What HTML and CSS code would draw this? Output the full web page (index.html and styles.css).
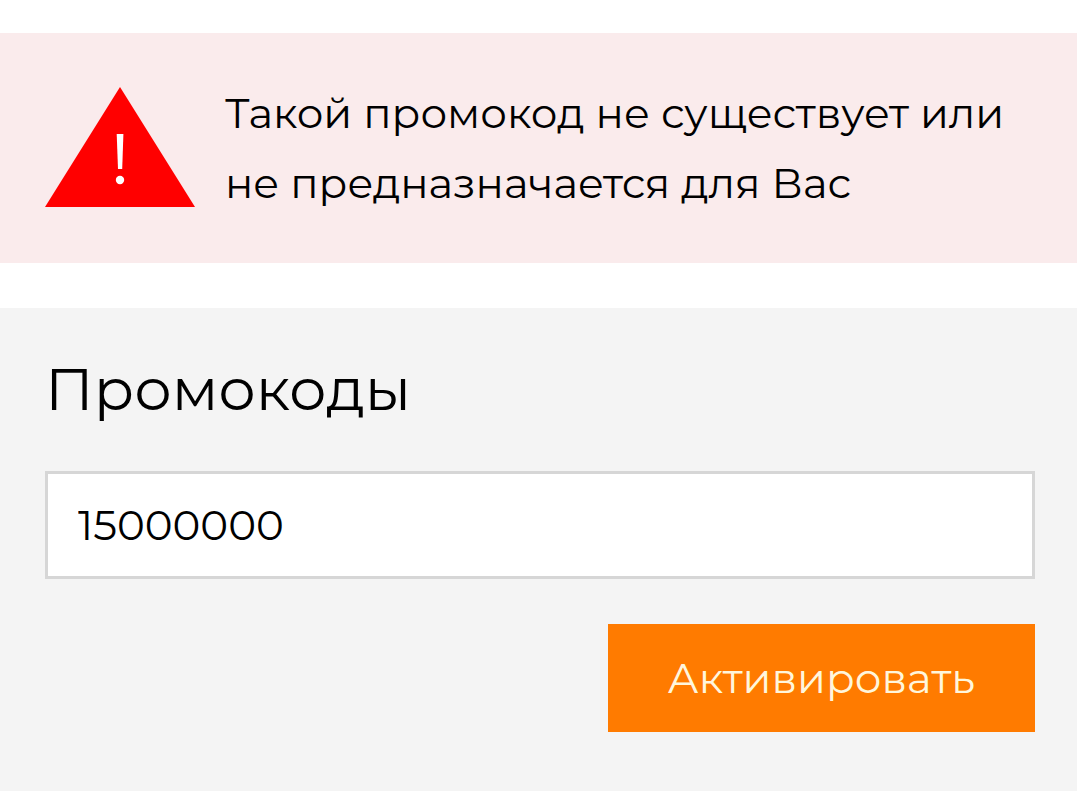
FILE: index.html
```html
<!DOCTYPE html>
<html lang="ru">
<head>
    <meta charset="UTF-8">
    <meta name="viewport" content="width=device-width, initial-scale=1.0">
    <title>Промокоды</title>
    <link rel="stylesheet" href="styles.css">
</head>
<body>

    <div class="alert" role="alert">
        <svg class="alert-icon" viewBox="0 0 150 120" aria-hidden="true">
            <path d="M75 0L150 120H0Z" fill="#ff0000"/>
            <path d="M71.7 47H78.4L77.2 82H73Z" fill="#fff"/>
            <circle cx="75" cy="93" r="4.2" fill="#fff"/>
        </svg>
        <p class="alert-text">Такой промокод не существует или не предназначается для Вас</p>
    </div>

    <form class="promo">
        <h1 class="promo-title"><label for="promocode">Промокоды</label></h1>
        <input class="promo-input" type="text" id="promocode" name="promocode" value="15000000">
        <button class="promo-button" type="submit">Активировать</button>
    </form>

</body>
</html>
```
FILE: styles.css
```css
* {
    box-sizing: border-box;
}

body {
    margin: 0;
    padding-top: 33px;
    min-height: 100vh;
    display: flex;
    flex-direction: column;
    font-family: Montserrat, "Open Sans", sans-serif;
    color: #000;
    background: #fff;
}

.alert {
    display: flex;
    align-items: flex-start;
    gap: 30px;
    padding: 45px 42px 45px 45px;
    margin-bottom: 45px;
    background: #faebec;
}

.alert-icon {
    width: 150px;
    height: 120px;
    margin-top: 9px;
    flex-shrink: 0;
}

.alert-text {
    margin: 0;
    font-size: 42px;
    line-height: 70px;
}

.promo {
    flex: 1;
    display: flex;
    flex-direction: column;
    padding: 45px 42px 59px 45px;
    background: #f4f4f4;
}

.promo-title {
    margin: 0 0 45px;
    font-size: 59px;
    font-weight: 400;
    line-height: 73px;
}

.promo-input {
    width: 100%;
    height: 108px;
    padding: 0 30px;
    border: 3px solid #d6d6d6;
    border-radius: 0;
    background: #fff;
    font-family: inherit;
    font-size: 42px;
    color: #000;
}

.promo-button {
    align-self: flex-end;
    height: 108px;
    margin-top: 45px;
    padding: 0 60px;
    border: none;
    background: #ff7b00;
    font-family: inherit;
    font-size: 42px;
    color: #fff6dc;
    cursor: pointer;
}
```
